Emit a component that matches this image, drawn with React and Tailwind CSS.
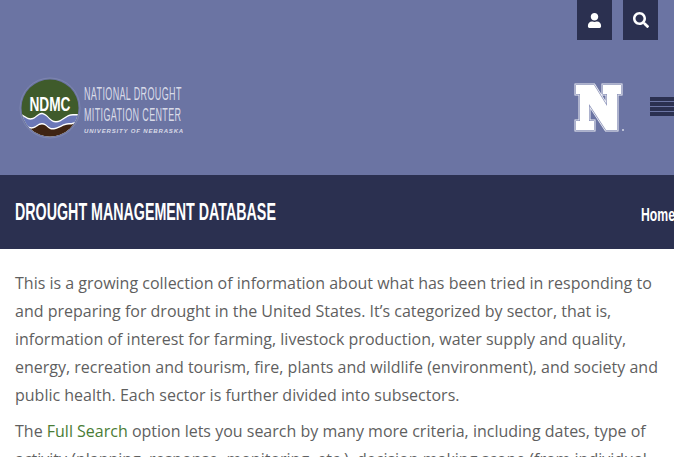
import React from 'react';
import { FaUser, FaSearch } from 'react-icons/fa';

const nPath = 'M2 2 H20 L33 23 V11 H29 V2 H47 V11 H43 V47 H32 L15 21 V38 H20 V47 H2 V38 H6 V11 H2 Z';

const NdmcLogo = () => (
  <svg width="62" height="62" viewBox="0 0 62 62" className="shrink-0">
    <circle cx="31" cy="31" r="30" fill="none" stroke="#858db4" strokeWidth="0.7" />
    <clipPath id="disc">
      <circle cx="31" cy="31" r="28.5" />
    </clipPath>
    <g clipPath="url(#disc)">
      <rect width="62" height="62" fill="#3f5b2b" />
      <path d="M0 36 C6 38 8 42 13 41 C18 40 19 35 24 36 C29 37 31 44 37 44 C43 44 47 37 54 37 C57 37 59 37 62 37 V62 H0 Z" fill="#ffffff" />
      <path d="M0 37.5 C6 39.5 8 43.5 13 42.5 C18 41.5 19 36.5 24 37.5 C29 38.5 31 45.5 37 45.5 C43 45.5 47 38.5 54 38.5 C57 38.5 59 38.5 62 38.5 V62 H0 Z" fill="#6b78b8" />
      <path d="M0 46 C6 46 9 51 14 50 C18 49 19 46 23 46 C28 46 29 52 35 51 C41 50 44 46 50 46 C54 46 58 44 62 44 V62 H0 Z" fill="#ffffff" />
      <path d="M0 48 C6 48 9 52.5 14 51.5 C18 50.5 19 47.5 23 47.5 C28 47.5 29 53.5 35 52.5 C41 51.5 44 47.5 50 47.5 C54 47.5 58 45.5 62 45.5 V62 H0 Z" fill="#3f2412" />
    </g>
    <text x="31" y="33.5" textAnchor="middle" fill="#ffffff" fontSize="20" fontWeight="700" textLength="41" lengthAdjust="spacingAndGlyphs" fontFamily="'Liberation Sans', sans-serif">NDMC</text>
  </svg>
);

const NebraskaN = () => (
  <svg width="51" height="49" viewBox="0 0 51 49" className="shrink-0">
    <path d={nPath} fill="#ffffff" stroke="#f1f2f7" strokeWidth="3" />
    <path d={nPath} fill="none" stroke="#8f96bb" strokeWidth="1.4" />
    <path d={nPath} fill="#ffffff" />
    <circle cx="49" cy="47" r="1" fill="#d5d8e6" />
  </svg>
);

export default function App() {
  return (
    <div className="h-[457px] w-[674px] overflow-hidden bg-white font-['Open_Sans',sans-serif]">
      <header className="h-[175px] bg-[#6b74a3]">
        <div className="flex justify-end gap-[11px] pr-[16px]">
          <button className="flex h-10 w-[35px] items-center justify-center bg-[#2b3050] text-white">
            <FaUser className="text-[15px]" />
          </button>
          <button className="flex h-10 w-[35px] items-center justify-center bg-[#2b3050] text-white">
            <FaSearch className="text-[16px]" />
          </button>
        </div>
        <div className="flex items-start pl-[19px] pt-[37px]">
          <NdmcLogo />
          <div className="ml-[3px] mt-[7px] font-['Liberation_Sans',sans-serif] text-[#d9dbe8]">
            <div className="origin-left scale-x-[0.5] whitespace-nowrap text-[18px] font-light leading-[21px] tracking-[0.04em]">NATIONAL DROUGHT</div>
            <div className="origin-left scale-x-[0.5] whitespace-nowrap text-[18px] font-light leading-[21px] tracking-[0.04em]">MITIGATION CENTER</div>
            <div className="mt-[1px] whitespace-nowrap text-[6px] font-bold italic leading-[8px] tracking-[0.14em]">UNIVERSITY OF NEBRASKA</div>
          </div>
          <div className="ml-auto flex items-start">
            <div className="mt-[6px]"><NebraskaN /></div>
            <div className="ml-[25px] mt-[20px] flex w-[24px] flex-col gap-[1px]">
              <div className="h-1 bg-[#2b3050]" />
              <div className="h-1 bg-[#2b3050]" />
              <div className="h-1 bg-[#2b3050]" />
              <div className="h-1 bg-[#2b3050]" />
            </div>
          </div>
        </div>
      </header>

      <div className="flex h-[74px] items-center justify-between overflow-hidden bg-[#2b3050] pl-[15px] font-['Liberation_Sans',sans-serif] text-white">
        <h1 className="origin-left scale-x-[0.62] whitespace-nowrap text-[23px] font-bold">DROUGHT MANAGEMENT DATABASE</h1>
        <div className="mt-[6px] w-[33px] overflow-hidden">
          <a className="inline-block origin-left scale-x-[0.68] whitespace-nowrap text-[18px] font-bold">Home</a>
        </div>
      </div>

      <main className="px-[15px] pt-[20px] text-base leading-[28px] text-[#5f5f5f]">
        <p>
          This is a growing collection of information about what has been tried in responding to and preparing for drought in the United States. It’s categorized by sector, that is, information of interest for farming, livestock production, water supply and quality, energy, recreation and tourism, fire, plants and wildlife (environment), and society and public health. Each sector is further divided into subsectors.
        </p>
        <p className="mt-[8px]">
          The <a className="text-[#4a7c35]">Full Search</a> option lets you search by many more criteria, including dates, type of activity (planning, response, monitoring, etc.), decision making scope (from individual
        </p>
      </main>
    </div>
  );
}
